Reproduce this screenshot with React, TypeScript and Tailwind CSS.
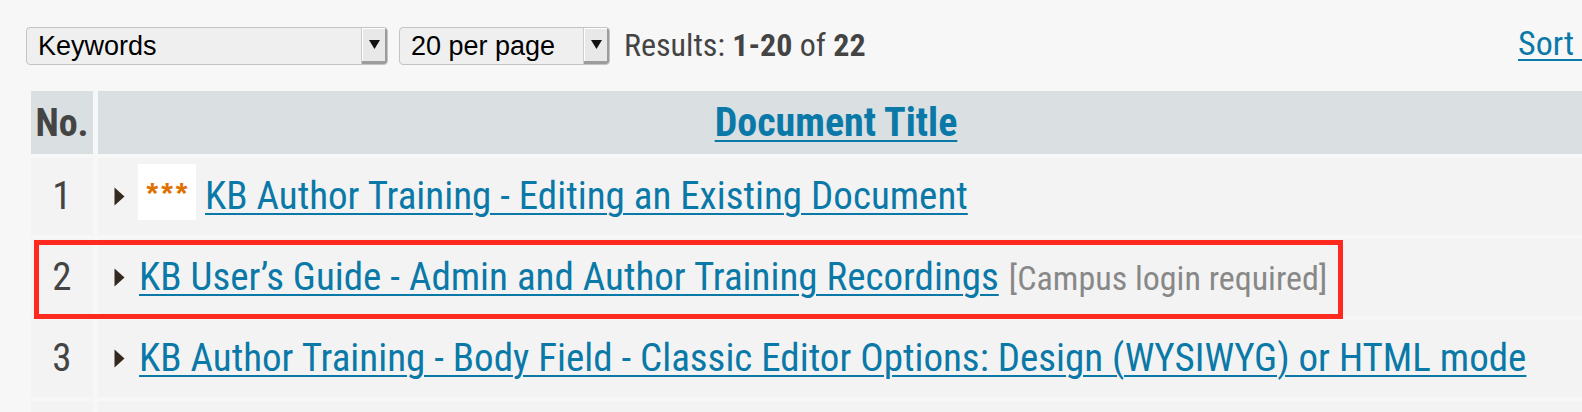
import React from "react";

const COND = "font-['Roboto_Condensed',Roboto,sans-serif]";

function Arrow() {
  return (
    <svg width="11" height="19" viewBox="0 0 11 19" className="shrink-0">
      <path d="M0.5 0.5 L10.5 9.5 L0.5 18.5 Z" fill="#33291f" />
    </svg>
  );
}

function Select({ label, width }: { label: string; width: string }) {
  return (
    <div
      className={`${width} h-[38px] flex items-stretch rounded-[4px] border border-[#c4c4c4] bg-[#efefef] shrink-0 overflow-hidden`}
    >
      <div className="flex-1 flex items-center pl-[11px] text-[27px] text-black font-['Liberation_Sans',Arial,sans-serif] leading-none">
        {label}
      </div>
      <div className="w-[26px] flex items-center justify-center border-l border-[#cdcdcd] bg-[#e8e8e8] shadow-[inset_-2px_-3px_0_#9c9c9c,inset_1px_1px_0_#ffffff]">
        <svg width="11" height="9" viewBox="0 0 11 9" className="-mt-[4px]">
          <path d="M0 0 L11 0 L5.5 9 Z" fill="#111" />
        </svg>
      </div>
    </div>
  );
}

function Row({
  n,
  children,
  highlight,
}: {
  n?: string;
  children?: React.ReactNode;
  highlight?: boolean;
}) {
  return (
    <div className="relative flex gap-[5px] h-[77px]">
      <div
        className={`w-[62px] shrink-0 bg-[#f3f3f3] flex items-center justify-center text-[39px] text-[#444] leading-none ${COND}`}
      >
        {n}
      </div>
      <div className="flex-1 bg-[#f3f3f3] flex items-center pl-[16px] whitespace-nowrap">
        {children}
      </div>
      {highlight && (
        <div className="absolute left-[3px] top-[1px] w-[1309px] h-[79px] border-[5px] border-[#ff2a1f] pointer-events-none" />
      )}
    </div>
  );
}

const linkCls = `text-[39px] leading-none text-[#0a79a8] underline decoration-2 underline-offset-[4px] ${COND}`;

export default function App() {
  return (
    <div className="w-[1582px] h-[412px] overflow-hidden bg-[#f7f7f7] pl-[26px] pt-[27px]">
      <div className="flex items-center h-[38px] whitespace-nowrap">
        <Select label="Keywords" width="w-[362px]" />
        <div className="w-[11px] shrink-0" />
        <Select label="20 per page" width="w-[211px]" />
        <div className={`ml-[14px] text-[32px] leading-none text-[#444] ${COND} -mt-[3px]`}>
          Results: <b>1-20</b> of <b>22</b>
        </div>
        <div className="flex-1" />
        <div className="w-[64px] shrink-0 overflow-visible -mt-[6px]">
          <a href="#" className={`text-[34px] leading-none text-[#0a79a8] underline decoration-2 underline-offset-[4px] ${COND}`}>
            Sort by
          </a>
        </div>
      </div>

      <div className="ml-[5px] mt-[26px] flex flex-col gap-[4px]">
        <div className="flex gap-[5px] h-[63px]">
          <div className={`w-[62px] shrink-0 bg-[#dadfe2] flex items-center justify-center text-[38px] font-bold text-[#444] leading-none ${COND}`}>
            No.
          </div>
          <div className="flex-1 bg-[#dadfe2] flex items-center justify-center pr-[8px]">
            <a href="#" className={`text-[40px] leading-none text-[#0a79a8] underline decoration-2 underline-offset-[4px] ${COND} font-bold`}>
              Document Title
            </a>
          </div>
        </div>

        <Row n="1">
          <Arrow />
          <div className="ml-[13px] w-[58px] h-[56px] bg-white flex justify-center pt-[14px] -mt-[9px] shrink-0">
            <span className="text-[30px] font-bold leading-none text-[#e07000] tracking-[3px] pl-[3px] font-['Liberation_Sans',Arial,sans-serif]">
              ***
            </span>
          </div>
          <a href="#" className={`${linkCls} ml-[9px]`}>
            KB Author Training - Editing an Existing Document
          </a>
        </Row>

        <Row n="2" highlight>
          <Arrow />
          <a href="#" className={`${linkCls} ml-[14px]`}>
            KB User’s Guide - Admin and Author Training Recordings
          </a>
          <span className={`ml-[10px] text-[34px] leading-none text-[#888] ${COND}`}>
            [Campus login required]
          </span>
        </Row>

        <Row n="3">
          <Arrow />
          <a href="#" className={`${linkCls} ml-[14px]`}>
            KB Author Training - Body Field - Classic Editor Options: Design (WYSIWYG) or HTML mode
          </a>
        </Row>

        <Row />
      </div>
    </div>
  );
}
